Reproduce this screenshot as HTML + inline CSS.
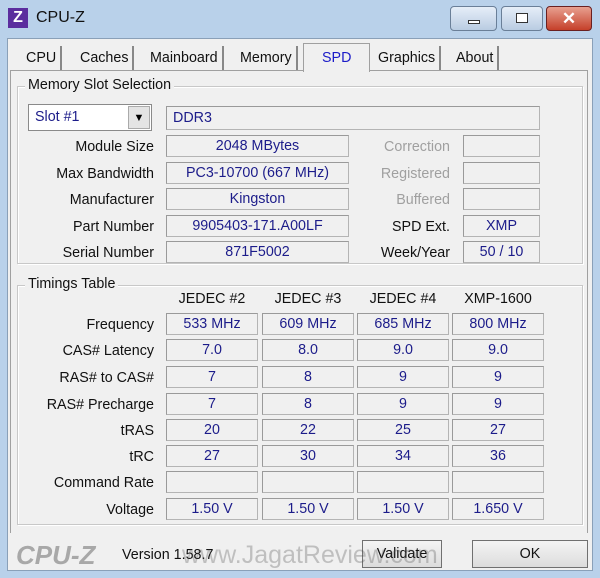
<!DOCTYPE html><html><head><style>
*{margin:0;padding:0;box-sizing:border-box}
body{width:600px;height:578px;background:#b9d1ea;font-family:"Liberation Sans",sans-serif;font-size:14.3px;position:relative;overflow:hidden}
.a{position:absolute}
.win{left:7px;top:38px;width:586px;height:533px;background:#f0f0f0;border:1px solid #8aa0b8}
.f{position:absolute;height:22px;border:1px solid #b4b4b4;border-top-color:#9a9a9a;border-left-color:#9a9a9a;background:#f0f0f0;color:#1c1c8a;text-align:center;line-height:21px}
.l{position:absolute;text-align:right;color:#111;line-height:24px}
.g{color:#a0a0a0}
.grp{position:absolute;border:1px solid #c8c8c8;box-shadow:inset 1px 1px 0 #fff,1px 1px 0 #fff}
.gl{position:absolute;background:#f0f0f0;padding:0 3px;color:#111}
.tab{position:absolute;top:46px;height:24px;line-height:24px;border-right:2px solid #888;padding:0 4px;color:#111}
.btn{position:absolute;border:1px solid #707070;background:linear-gradient(#f4f4f4,#dcdcdc);text-align:center;line-height:26px;color:#111}
</style></head><body>
<div class="a" style="left:8px;top:8px;width:20px;height:20px;background:#5b2d9e;color:#fff;font-weight:bold;text-align:center;line-height:20px;font-size:16px">Z</div>
<div class="a" style="left:36px;top:9px;font-size:16px;color:#111">CPU-Z</div>
<div class="a" style="left:450px;top:6px;width:47px;height:25px;border:1px solid #6a7f98;border-radius:4px;background:linear-gradient(#e6eef8,#b9cce2)"><div class="a" style="left:17px;top:13px;width:12px;height:4px;border:1px solid #333;background:#fff"></div></div>
<div class="a" style="left:501px;top:6px;width:42px;height:25px;border:1px solid #6a7f98;border-radius:4px;background:linear-gradient(#e6eef8,#b9cce2)"><div class="a" style="left:14px;top:6px;width:12px;height:10px;border:1px solid #333;background:#fff"></div></div>
<div class="a" style="left:546px;top:6px;width:46px;height:25px;border:1px solid #6a2020;border-radius:4px;background:linear-gradient(#e8a090,#c5402a);color:#fff;font-weight:bold;text-align:center;line-height:23px;font-size:17px">✕</div>
<div class="win a"></div>
<div class="a" style="left:10px;top:70px;width:578px;height:463px;border:1px solid #a0a0a0;border-bottom:none;background:#f0f0f0"></div>
<div class="a" style="left:303px;top:43px;width:67px;height:29px;background:#f0f0f0;border:1px solid #a0a0a0;border-bottom:none"></div>
<div class="tab" style="left:22px">CPU</div>
<div class="tab" style="left:76px">Caches</div>
<div class="tab" style="left:146px">Mainboard</div>
<div class="tab" style="left:236px">Memory</div>
<div class="a" style="left:322px;top:46px;line-height:24px;color:#1c1cc8">SPD</div>
<div class="tab" style="left:374px">Graphics</div>
<div class="tab" style="left:452px">About</div>

<div class="grp" style="left:17px;top:86px;width:566px;height:178px"></div>
<div class="gl" style="left:25px;top:77px">Memory Slot Selection</div>
<div class="a" style="left:28px;top:104px;width:124px;height:27px;border:1px solid #8a8a8a;background:#fff;color:#1c1c8a;line-height:25px;padding-left:6px">Slot #1</div>
<div class="a" style="left:128px;top:106px;width:22px;height:23px;background:#e4e4e4;border:1px solid #aaa;text-align:center;line-height:22px;font-size:11px">▼</div>
<div class="f" style="left:166px;top:106px;width:374px;height:24px;text-align:left;padding-left:6px;line-height:22px">DDR3</div>

<div class="l" style="left:20px;width:134px;top:135px">Module Size</div><div class="f" style="left:166px;top:135px;width:183px">2048 MBytes</div>
<div class="l" style="left:20px;width:134px;top:162px">Max Bandwidth</div><div class="f" style="left:166px;top:162px;width:183px">PC3-10700 (667 MHz)</div>
<div class="l" style="left:20px;width:134px;top:188px">Manufacturer</div><div class="f" style="left:166px;top:188px;width:183px">Kingston</div>
<div class="l" style="left:20px;width:134px;top:215px">Part Number</div><div class="f" style="left:166px;top:215px;width:183px">9905403-171.A00LF</div>
<div class="l" style="left:20px;width:134px;top:241px">Serial Number</div><div class="f" style="left:166px;top:241px;width:183px">871F5002</div>

<div class="l g" style="left:350px;width:100px;top:135px">Correction</div><div class="f" style="left:463px;top:135px;width:77px"></div>
<div class="l g" style="left:350px;width:100px;top:162px">Registered</div><div class="f" style="left:463px;top:162px;width:77px"></div>
<div class="l g" style="left:350px;width:100px;top:188px">Buffered</div><div class="f" style="left:463px;top:188px;width:77px"></div>
<div class="l" style="left:350px;width:100px;top:215px">SPD Ext.</div><div class="f" style="left:463px;top:215px;width:77px">XMP</div>
<div class="l" style="left:350px;width:100px;top:241px">Week/Year</div><div class="f" style="left:463px;top:241px;width:77px">50 / 10</div>

<div class="grp" style="left:17px;top:285px;width:566px;height:240px"></div>
<div class="gl" style="left:25px;top:276px">Timings Table</div>
<div class="l" style="left:166px;width:92px;top:287px;text-align:center">JEDEC #2</div>
<div class="l" style="left:262px;width:92px;top:287px;text-align:center">JEDEC #3</div>
<div class="l" style="left:357px;width:92px;top:287px;text-align:center">JEDEC #4</div>
<div class="l" style="left:452px;width:92px;top:287px;text-align:center">XMP-1600</div>

<div class="l" style="left:20px;width:134px;top:313px">Frequency</div>
<div class="f" style="left:166px;top:313px;width:92px">533 MHz</div><div class="f" style="left:262px;top:313px;width:92px">609 MHz</div><div class="f" style="left:357px;top:313px;width:92px">685 MHz</div><div class="f" style="left:452px;top:313px;width:92px">800 MHz</div>
<div class="l" style="left:20px;width:134px;top:339px">CAS# Latency</div>
<div class="f" style="left:166px;top:339px;width:92px">7.0</div><div class="f" style="left:262px;top:339px;width:92px">8.0</div><div class="f" style="left:357px;top:339px;width:92px">9.0</div><div class="f" style="left:452px;top:339px;width:92px">9.0</div>
<div class="l" style="left:20px;width:134px;top:366px">RAS# to CAS#</div>
<div class="f" style="left:166px;top:366px;width:92px">7</div><div class="f" style="left:262px;top:366px;width:92px">8</div><div class="f" style="left:357px;top:366px;width:92px">9</div><div class="f" style="left:452px;top:366px;width:92px">9</div>
<div class="l" style="left:20px;width:134px;top:393px">RAS# Precharge</div>
<div class="f" style="left:166px;top:393px;width:92px">7</div><div class="f" style="left:262px;top:393px;width:92px">8</div><div class="f" style="left:357px;top:393px;width:92px">9</div><div class="f" style="left:452px;top:393px;width:92px">9</div>
<div class="l" style="left:20px;width:134px;top:419px">tRAS</div>
<div class="f" style="left:166px;top:419px;width:92px">20</div><div class="f" style="left:262px;top:419px;width:92px">22</div><div class="f" style="left:357px;top:419px;width:92px">25</div><div class="f" style="left:452px;top:419px;width:92px">27</div>
<div class="l" style="left:20px;width:134px;top:445px">tRC</div>
<div class="f" style="left:166px;top:445px;width:92px">27</div><div class="f" style="left:262px;top:445px;width:92px">30</div><div class="f" style="left:357px;top:445px;width:92px">34</div><div class="f" style="left:452px;top:445px;width:92px">36</div>
<div class="l" style="left:20px;width:134px;top:471px">Command Rate</div>
<div class="f" style="left:166px;top:471px;width:92px"></div><div class="f" style="left:262px;top:471px;width:92px"></div><div class="f" style="left:357px;top:471px;width:92px"></div><div class="f" style="left:452px;top:471px;width:92px"></div>
<div class="l" style="left:20px;width:134px;top:498px">Voltage</div>
<div class="f" style="left:166px;top:498px;width:92px">1.50 V</div><div class="f" style="left:262px;top:498px;width:92px">1.50 V</div><div class="f" style="left:357px;top:498px;width:92px">1.50 V</div><div class="f" style="left:452px;top:498px;width:92px">1.650 V</div>

<div class="a" style="left:16px;top:540px;font-size:26px;font-weight:bold;font-style:italic;color:#a8a8a8">CPU-Z</div>
<div class="a" style="left:122px;top:547px;color:#111">Version 1.58.7</div>
<div class="btn" style="left:362px;top:540px;width:80px;height:28px">Validate</div>
<div class="btn" style="left:472px;top:540px;width:116px;height:28px">OK</div>
<div class="a" style="left:182px;top:541px;font-size:25px;color:rgba(80,80,80,0.3)">www.JagatReview.com</div>
</body></html>
